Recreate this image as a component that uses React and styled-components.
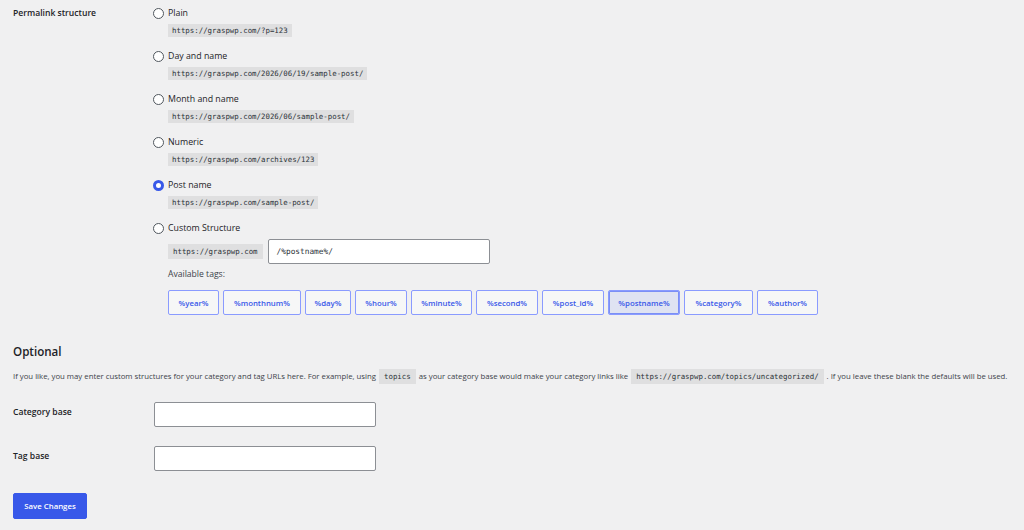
import React from "react";
import styled, { createGlobalStyle, css } from "styled-components";

const Global = createGlobalStyle`
  html, body { margin: 0; padding: 0; background: #f0f0f1; }
  body { font-family: "Open Sans", "Noto Sans", sans-serif; color: #1d2327; font-size: 9px; }
  * { box-sizing: border-box; }
`;

const Page = styled.div`
  padding: 6px 13px 0 13px;
  display: flex;
  flex-direction: column;
`;

const Row = styled.div`
  display: grid;
  grid-template-columns: ${(p) => p.$col || 140}px 1fr;
  align-items: start;
  margin-top: ${(p) => p.$mt || 0}px;
`;

const Label = styled.div`
  font-weight: 600;
  font-size: 8.6px;
  line-height: 14px;
  padding-top: ${(p) => p.$pt || 0}px;
  color: #1d2327;
`;

const Options = styled.div`
  display: flex;
  flex-direction: column;
`;

const Option = styled.div`
  display: flex;
  flex-direction: column;
  align-items: flex-start;
  gap: 4px;
  margin-bottom: ${(p) => (p.$last ? 0 : 12)}px;
`;

const RadioLine = styled.label`
  display: flex;
  align-items: center;
  gap: 4px;
  height: 14px;
  font-size: 8.8px;
  color: #1d2327;
`;

const Radio = styled.span`
  width: 11px;
  height: 11px;
  border-radius: 50%;
  background: #fff;
  flex: none;
  ${(p) =>
    p.$checked
      ? css`border: 3px solid #3858e9;`
      : css`border: 1px solid #50575e;`}
`;

const Code = styled.code`
  font-family: "DejaVu Sans Mono", "Liberation Mono", monospace;
  font-size: 7.4px;
  line-height: 13px;
  padding: 0 4px;
  margin-left: 15px;
  background: rgba(0, 0, 0, 0.07);
  color: #2c3338;
  white-space: nowrap;
`;

const InlineCode = styled(Code)`
  margin: 0 3px;
  display: inline-block;
  line-height: 15px;
  padding: 0 5px;
`;

const CustomRow = styled.div`
  display: flex;
  align-items: center;
  gap: 5px;
  margin-left: 15px;
`;

const CustomCode = styled(Code)`
  margin-left: 0;
  line-height: 15px;
  padding: 0 5px;
`;

const TextInput = styled.div`
  width: ${(p) => p.$w}px;
  height: 25px;
  background: #fff;
  border: 1px solid #8c8f94;
  border-radius: 2px;
  display: flex;
  align-items: center;
  padding-left: 8px;
  font-family: "DejaVu Sans Mono", "Liberation Mono", monospace;
  font-size: 7.8px;
  color: #2c3338;
`;

const Available = styled.div`
  margin: 0 0 0 15px;
  font-size: 8.6px;
  line-height: 12px;
  color: #3c434a;
`;

const Tags = styled.div`
  display: flex;
  gap: 4px;
  margin: 6px 0 0 15px;
`;

const Tag = styled.button`
  height: 25px;
  min-width: ${(p) => p.$minw || 0}px;
  padding: 0 7px;
  font-family: "Open Sans", "Noto Sans", sans-serif;
  font-weight: 600;
  font-size: 7.8px;
  color: #3858e9;
  background: ${(p) => (p.$active ? "#dfe3f2" : "#f6f7f7")};
  border: 1px solid #8a9bff;
  border-radius: 2px;
  box-shadow: ${(p) => (p.$active ? "inset 0 0 0 1px #7b8ff5" : "none")};
  white-space: nowrap;
`;

const Heading = styled.h2`
  margin: 28px 0 0 0;
  font-size: 11.6px;
  font-weight: 600;
  line-height: 18px;
  color: #1d2327;
`;

const Para = styled.p`
  margin: 7px 0 0 0;
  font-size: 7.78px;
  line-height: 16px;
  color: #3c434a;
  white-space: nowrap;
`;

const SaveButton = styled.button`
  margin-top: 22px;
  width: 74px;
  height: 26px;
  background: #3858e9;
  color: #fff;
  border: 1px solid #3858e9;
  border-radius: 2px;
  font-family: "Open Sans", "Noto Sans", sans-serif;
  font-weight: 600;
  font-size: 7.8px;
  padding: 0;
  align-self: flex-start;
`;

const options = [
  { label: "Plain", url: "https://graspwp.com/?p=123" },
  { label: "Day and name", url: "https://graspwp.com/2026/06/19/sample-post/" },
  { label: "Month and name", url: "https://graspwp.com/2026/06/sample-post/" },
  { label: "Numeric", url: "https://graspwp.com/archives/123" },
  { label: "Post name", url: "https://graspwp.com/sample-post/", checked: true },
];

const tags = [
  { t: "%year%", w: 51 },
  { t: "%monthnum%", w: 78 },
  { t: "%day%", w: 46 },
  { t: "%hour%", w: 52 },
  { t: "%minute%", w: 61 },
  { t: "%second%", w: 62 },
  { t: "%post_id%", w: 62 },
  { t: "%postname%", w: 72 },
  { t: "%category%", w: 69 },
  { t: "%author%", w: 61 },
];

export default function App() {
  return (
    <>
      <Global />
      <Page>
        <Row>
          <Label>Permalink structure</Label>
          <Options>
            {options.map((o) => (
              <Option key={o.label}>
                <RadioLine>
                  <Radio $checked={o.checked} />
                  {o.label}
                </RadioLine>
                <Code>{o.url}</Code>
              </Option>
            ))}
            <Option $last>
              <RadioLine>
                <Radio />
                Custom Structure
              </RadioLine>
              <CustomRow>
                <CustomCode>https://graspwp.com</CustomCode>
                <TextInput $w={222}>/%postname%/</TextInput>
              </CustomRow>
              <Available>Available tags:</Available>
              <Tags>
                {tags.map(({ t, w }) => (
                  <Tag key={t} $minw={w} $active={t === "%postname%"}>
                    {t}
                  </Tag>
                ))}
              </Tags>
            </Option>
          </Options>
        </Row>
        <Heading>Optional</Heading>
        <Para>
          If you like, you may enter custom structures for your category and tag URLs here. For example, using
          <InlineCode>topics</InlineCode>
          as your category base would make your category links like
          <InlineCode>https://graspwp.com/topics/uncategorized/</InlineCode>. If you leave these blank the defaults will be used.
        </Para>
        <Row $mt={18} $col={141}>
          <Label $pt={3}>Category base</Label>
          <TextInput $w={222} />
        </Row>
        <Row $mt={19} $col={141}>
          <Label $pt={3}>Tag base</Label>
          <TextInput $w={222} />
        </Row>
        <SaveButton>Save Changes</SaveButton>
      </Page>
    </>
  );
}
